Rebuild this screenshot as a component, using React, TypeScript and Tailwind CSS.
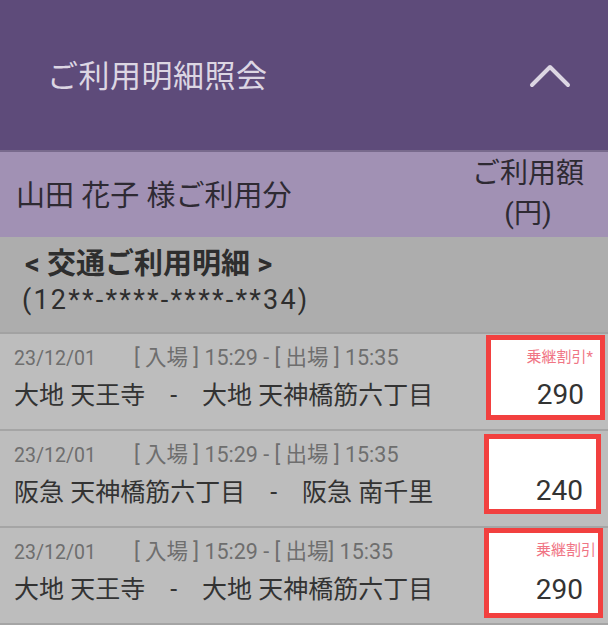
import React from "react";

const FONT = { fontFamily: 'Roboto, "Noto Sans CJK JP", sans-serif' };

type Row = {
  time: string;
  route: string;
  label?: string;
  amount: string;
  box: string;
  labelPad: string;
  amountPad: string;
};

const rows: Row[] = [
  {
    time: "[ 入場 ] 15:29 - [ 出場 ] 15:35",
    route: "大地 天王寺　-　大地 天神橋筋六丁目",
    label: "乗継割引*",
    amount: "290",
    box: "mt-[1px] h-[85px] w-[119px] mr-[3px]",
    labelPad: "pr-[7px]",
    amountPad: "pr-[16px] pb-[4px]",
  },
  {
    time: "[ 入場 ] 15:29 - [ 出場 ] 15:35",
    route: "阪急 天神橋筋六丁目　-　阪急 南千里",
    amount: "240",
    box: "mt-[3px] h-[80px] w-[117px] mr-[7px]",
    labelPad: "pr-[4px]",
    amountPad: "pr-[13px] pb-[2px]",
  },
  {
    time: "[ 入場 ] 15:29 - [ 出場] 15:35",
    route: "大地 天王寺　-　大地 天神橋筋六丁目",
    label: "乗継割引",
    amount: "290",
    box: "mt-[0px] h-[90px] w-[119px] mr-[5px]",
    labelPad: "pr-[2px]",
    amountPad: "pr-[15px] pb-[7px]",
  },
];

export default function App() {
  return (
    <div className="w-[608px] h-[625px] overflow-hidden bg-[#e6e6e6]" style={FONT}>
      {/* Header */}
      <div className="h-[150px] bg-[#5e4b7a] flex items-center justify-between pl-[47px] pr-[36px]">
        <div className="text-[31px] leading-none text-[#dcd6e3] mt-[2px] tracking-[0.5px]">ご利用明細照会</div>
        <svg width="44" height="28" viewBox="0 0 44 28" className="mt-[2px]">
          <path d="M4 23 L22 5 L40 23" fill="none" stroke="#dcd6e3" strokeWidth="4" strokeLinecap="round" strokeLinejoin="round" />
        </svg>
      </div>
      <div className="h-[2px] bg-[#786a8c]" />
      {/* Name row */}
      <div className="h-[85px] bg-[#a191b4] flex items-center justify-between">
        <div className="pl-[16px] text-[29px] leading-none text-[#2e2a33] mt-[4px]">山田 花子 様ご利用分</div>
        <div className="w-[160px] text-center text-[28px] leading-[40px] text-[#2e2a33] mt-[-2px]">
          <div>ご利用額</div>
          <div>(円)</div>
        </div>
      </div>
      {/* Section header */}
      <div className="h-[95px] bg-[#adadad] flex flex-col pt-[10px] pl-[25px] text-[#2e2e2e]">
        <div className="text-[29px] leading-[34px] font-bold">&lt; 交通ご利用明細 &gt;</div>
        <div className="text-[27px] leading-[34px] mt-[2px] ml-[-3px] tracking-[2.2px]">(12**-****-****-**34)</div>
      </div>
      <div className="h-[2px] bg-[#a2a2a2]" />
      {/* Rows */}
      {rows.map((r, i) => (
        <div key={i} className="border-b-2 border-[#a5a5a5]">
          <div className="h-[95px] bg-[#bdbdbd] flex items-start">
            <div className="flex-1 flex flex-col pl-[14px] pt-[11px]">
              <div className="flex items-baseline text-[#6e6e6e] leading-[26px]">
                <span className="w-[120px] text-[19.5px]">23/12/01</span>
                <span className="text-[21.5px]">{r.time}</span>
              </div>
              <div className="text-[25px] leading-[30px] text-[#333333] mt-[9px] whitespace-nowrap">{r.route}</div>
            </div>
            <div className={`${r.box} border-[5px] border-[#f2403f] bg-white flex flex-col justify-between`}>
              <div className={`text-right text-[15px] leading-[20px] text-[#f07585] pt-[7px] ${r.labelPad}`}>
                {r.label ?? "\u00a0"}
              </div>
              <div className={`text-right text-[28px] leading-[32px] text-[#333333] ${r.amountPad}`}>
                {r.amount}
              </div>
            </div>
          </div>
        </div>
      ))}
    </div>
  );
}
